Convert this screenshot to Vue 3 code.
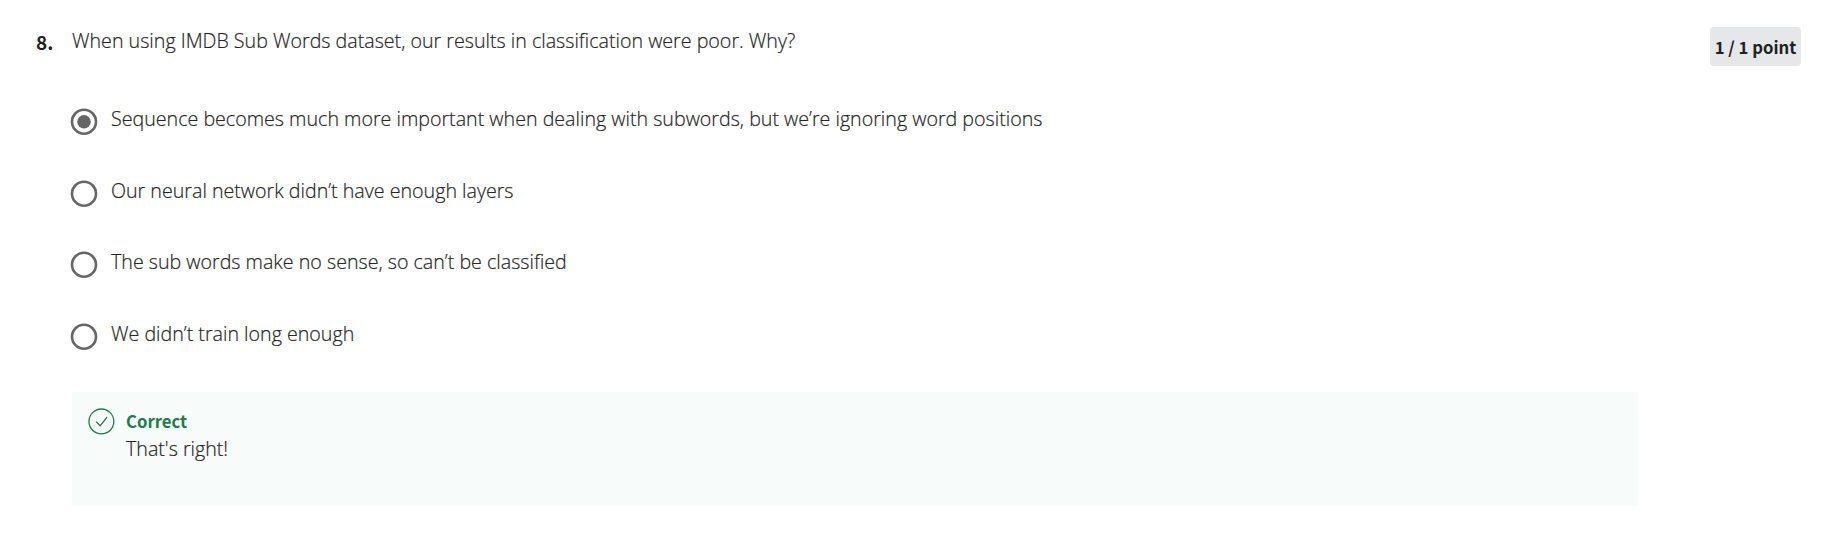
<script setup>
const options = [
  'Sequence becomes much more important when dealing with subwords, but we’re ignoring word positions',
  'Our neural network didn’t have enough layers',
  'The sub words make no sense, so can’t be classified',
  'We didn’t train long enough',
]
</script>

<template>
  <main class="question">
    <div class="number">8.</div>
    <section class="content">
      <div class="prompt">When using IMDB Sub Words dataset, our results in classification were poor. Why?</div>
      <div class="options">
        <label v-for="(option, i) in options" :key="i" class="option">
          <svg class="radio" width="28" height="28" viewBox="0 0 28 28">
            <circle cx="14" cy="13.7" r="12" fill="none" stroke="#666" stroke-width="2.6" />
            <circle v-if="i === 0" cx="14" cy="13.7" r="6.8" fill="#666" />
          </svg>
          <span class="text">{{ option }}</span>
        </label>
      </div>
      <div class="feedback">
        <svg class="check" width="27" height="28" viewBox="0 0 27 28" fill="none" stroke="#1d7c50" stroke-width="1.3">
          <circle cx="13.4" cy="14.4" r="12.4" />
          <path d="M8 14.6l4.2 4.1 6.9-8.6" />
        </svg>
        <div>
          <div class="verdict">Correct</div>
          <div class="message">That's right!</div>
        </div>
      </div>
    </section>
    <div class="points">1 / 1 point</div>
  </main>
</template>

<style>
body { background: #fff; }
</style>

<style scoped>
.question {
  display: flex;
  align-items: flex-start;
  box-sizing: border-box;
  width: 1847px;
  height: 537px;
  padding: 27px 46px 0 36px;
  font-family: "Open Sans", sans-serif;
  font-size: 19.65px;
  line-height: 28px;
  color: #262626;
  overflow: hidden;
}
.number { width: 36px; font-family: "Noto Sans CJK SC", sans-serif; font-size: 19px; font-weight: 700; color: #1f1f1f; line-height: 30px; flex: none; }
.content { width: 1566px; flex: none; font-weight: 300; }
.prompt { height: 28px; white-space: nowrap; }
.prompt, .text, .message { -webkit-text-stroke: 0.2px #262626; }
.options { display: flex; flex-direction: column; gap: 43.6px; padding-top: 50px; }
.option { display: flex; height: 28px; white-space: nowrap; }
.radio { flex: none; margin: 3px 13px 0 -2px; }
.feedback { display: flex; gap: 11px; box-sizing: border-box; height: 114px; margin-top: 44px; padding: 15px 16px; background: #f7fbf9; }
.verdict { font-family: "Noto Sans CJK SC", sans-serif; font-size: 16.7px; font-weight: 700; color: #1d7c50; }
.points { margin-left: auto; width: 91px; height: 39px; border-radius: 4px; background: #e5e7e8; text-align: center; font-family: "Noto Sans CJK SC", sans-serif; font-size: 16.7px; font-weight: 700; line-height: 41px; color: #1f1f1f; white-space: nowrap; }
</style>
